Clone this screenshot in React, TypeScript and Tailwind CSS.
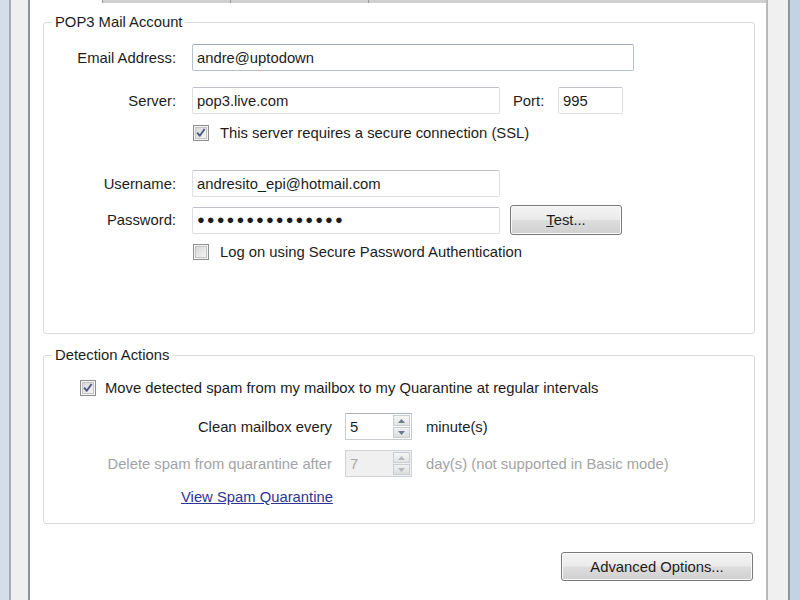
import React from "react";

function Check({ checked }: { checked: boolean }) {
  return (
    <svg width="16" height="16" viewBox="0 0 16 16" className="shrink-0">
      <defs>
        <linearGradient id={checked ? "cbg1" : "cbg0"} x1="0" y1="0" x2="1" y2="1">
          <stop offset="0" stopColor="#d6d6d6" />
          <stop offset="1" stopColor="#f7f7f7" />
        </linearGradient>
      </defs>
      <rect x="0.5" y="0.5" width="15" height="15" fill="#f4f4f4" stroke="#8f8f8f" />
      <rect x="2.5" y="2.5" width="11" height="11" fill={`url(#${checked ? "cbg1" : "cbg0"})`} stroke="#c4c4c4" />
      {checked && (
        <path d="M4.2 7.6 L6.8 10.8 L11.6 4" fill="none" stroke="#4a5a86" strokeWidth="1.9" strokeLinejoin="round" />
      )}
    </svg>
  );
}

function Field({ value, className, focus }: { value: string; className: string; focus?: boolean }) {
  return (
    <div
      className={`${className} h-[27px] flex items-center pl-[4px] rounded-[2px] border bg-white ${
        focus ? "border-[#b4c2cd] border-t-[#9eabb6]" : "border-[#dcdfe3] border-t-[#bfc3c9]"
      }`}
    >
      <span className="whitespace-nowrap">{value}</span>
    </div>
  );
}

function Spinner({ value, disabled }: { value: string; disabled?: boolean }) {
  const arrow = disabled ? "#b3b8c0" : "#6d7a8d";
  return (
    <div
      className={`ml-[13px] w-[67px] h-[27px] flex border ${
        disabled ? "bg-[#f0f0f0] border-[#cfd2d6] text-[#a6a6a6]" : "bg-white border-[#c8cbd0] border-t-[#adb1b8]"
      }`}
    >
      <div className="flex-1 flex items-center pl-[4px]">{value}</div>
      <div className="w-[19px] flex flex-col p-[1px] gap-[1px]">
        <div className="flex-1 flex items-center justify-center border border-[#c9ccd1] bg-[linear-gradient(to_bottom,#f5f5f5,#e4e4e4)]">
          <svg width="7" height="4" viewBox="0 0 7 4">
            <path d="M0 4 L3.5 0 L7 4 Z" fill={arrow} />
          </svg>
        </div>
        <div className="flex-1 flex items-center justify-center border border-[#c9ccd1] bg-[linear-gradient(to_bottom,#f0f0f0,#dedede)]">
          <svg width="7" height="4" viewBox="0 0 7 4">
            <path d="M0 0 L3.5 4 L7 0 Z" fill={arrow} />
          </svg>
        </div>
      </div>
    </div>
  );
}

const btn =
  "flex items-center justify-center rounded-[3px] border border-[#7a7a7a] bg-[linear-gradient(to_bottom,#f3f3f3_0%,#ebebeb_48%,#dddddd_52%,#d0d0d0_100%)] shadow-[inset_0_0_0_1px_#fafafa]";

export default function App() {
  return (
    <div className="w-[800px] h-[600px] flex overflow-hidden bg-white text-[#1c1c1c] font-['Liberation_Sans',Arial,sans-serif] text-[14.8px] leading-[18px]">
      <div className="w-[9px] bg-[#d5dee8]" />
      <div className="w-[2px] bg-[#a3adb9]" />
      <div className="w-[17px] bg-[#efefef]" />
      <div className="w-[2px] bg-[#8e9196]" />

      <div className="w-[736px] flex flex-col">
        <div className="h-[3px] flex">
          <div className="w-[72px] bg-white" />
          <div className="w-[128px] bg-[#cfcfcf] border-l border-[#9c9c9c]" />
          <div className="w-[138px] bg-[#cfcfcf] border-l border-[#9c9c9c]" />
          <div className="flex-1 bg-[#cfcfcf] border-l border-[#9c9c9c]" />
        </div>

        <div className="flex flex-col pl-[13px] pr-[11px]">
          <fieldset className="mt-[10px] h-[321px] border border-[#d5dade] rounded-[3px]">
            <legend className="ml-[8px] px-[3px] leading-[18px]">POP3 Mail Account</legend>

            <div className="mt-[13px] flex items-center">
              <div className="w-[132px] text-right">Email Address:</div>
              <Field value="andre@uptodown" className="ml-[16px] w-[442px]" focus />
            </div>

            <div className="mt-[16px] flex items-center">
              <div className="w-[132px] text-right">Server:</div>
              <Field value="pop3.live.com" className="ml-[16px] w-[308px]" />
              <div className="ml-[13px] w-[45px]">Port:</div>
              <Field value="995" className="w-[65px]" />
            </div>

            <div className="mt-[10px] h-[18px] flex items-center ml-[149px]">
              <Check checked />
              <span className="ml-[11px] whitespace-nowrap">This server requires a secure connection (SSL)</span>
            </div>

            <div className="mt-[28px] flex items-center">
              <div className="w-[132px] text-right">Username:</div>
              <Field value="andresito_epi@hotmail.com" className="ml-[16px] w-[308px]" />
            </div>

            <div className="mt-[8px] h-[30px] flex items-center">
              <div className="w-[132px] text-right">Password:</div>
              <Field value="●●●●●●●●●●●●●●●" className="ml-[16px] w-[308px] text-[13px] tracking-[2px]" />
              <div className={`${btn} ml-[10px] w-[112px] h-[30px]`}>
                <span>
                  <span className="underline">T</span>est...
                </span>
              </div>
            </div>

            <div className="mt-[8px] h-[18px] flex items-center ml-[149px]">
              <Check checked={false} />
              <span className="ml-[11px] whitespace-nowrap">Log on using Secure Password Authentication</span>
            </div>
          </fieldset>

          <fieldset className="mt-[12px] h-[178px] border border-[#d5dade] rounded-[3px]">
            <legend className="ml-[8px] px-[3px] leading-[18px]">Detection Actions</legend>

            <div className="mt-[15px] h-[18px] flex items-center ml-[36px]">
              <Check checked />
              <span className="ml-[9px] whitespace-nowrap">
                Move detected spam from my mailbox to my Quarantine at regular intervals
              </span>
            </div>

            <div className="mt-[16px] flex items-center">
              <div className="w-[288px] text-right">Clean mailbox every</div>
              <Spinner value="5" />
              <div className="ml-[14px]">minute(s)</div>
            </div>

            <div className="mt-[10px] flex items-center text-[#a3a3a3]">
              <div className="w-[288px] text-right">Delete spam from quarantine after</div>
              <Spinner value="7" disabled />
              <div className="ml-[14px]">day(s) (not supported in Basic mode)</div>
            </div>

            <div className="mt-[11px] h-[18px] ml-[137px]">
              <span className="underline text-[#2d3596]">View Spam Quarantine</span>
            </div>
          </fieldset>

          <div className="mt-[28px] flex justify-end">
            <div className={`${btn} mr-[2px] w-[192px] h-[29px]`}>Advanced Options...</div>
          </div>
        </div>
      </div>

      <div className="w-[2px] bg-[#b9b9b9]" />
      <div className="w-[20px] bg-[#f0f0f0]" />
      <div className="w-[2px] bg-[#8c95a2]" />
      <div className="w-[10px] bg-[#c4d3e3]" />
    </div>
  );
}
